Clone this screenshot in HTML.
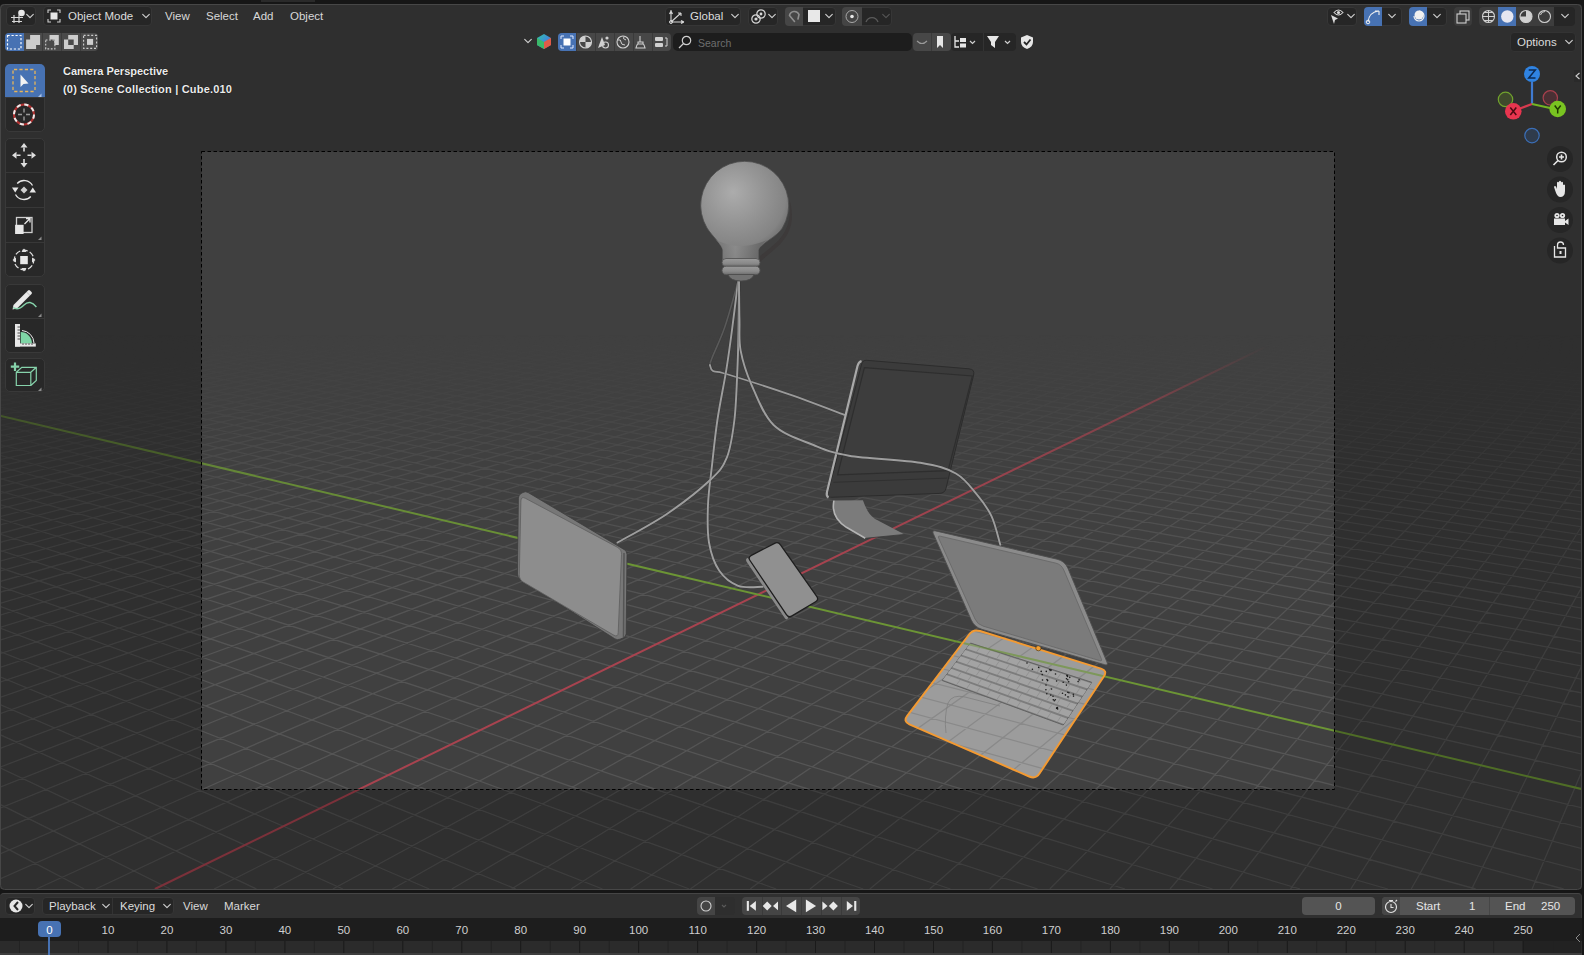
<!DOCTYPE html>
<html><head><meta charset="utf-8"><style>
*{box-sizing:border-box;margin:0;padding:0}
html,body{width:1584px;height:955px;overflow:hidden;background:#161616;font-family:"Liberation Sans",sans-serif;color:#d6d6d6}
.a{position:absolute}
</style></head><body>
<div class="a" style="left:261px;top:0;width:54px;height:4px;background:#242424"></div>
<svg id="vp" width="1584" height="955" viewBox="0 0 1584 955" style="position:absolute;left:0;top:0">
<defs>
 <linearGradient id="fade" x1="0" y1="0" x2="0" y2="955" gradientUnits="userSpaceOnUse">
  <stop offset="0" stop-color="#fff" stop-opacity="0"/>
  <stop offset="0.35" stop-color="#fff" stop-opacity="0"/>
  <stop offset="0.419" stop-color="#fff" stop-opacity="0.18"/>
  <stop offset="0.471" stop-color="#fff" stop-opacity="0.45"/>
  <stop offset="0.545" stop-color="#fff" stop-opacity="0.75"/>
  <stop offset="0.628" stop-color="#fff" stop-opacity="0.95"/>
  <stop offset="1" stop-color="#fff" stop-opacity="1"/>
 </linearGradient>
 <linearGradient id="fade2" x1="0" y1="0" x2="0" y2="955" gradientUnits="userSpaceOnUse">
  <stop offset="0" stop-color="#fff" stop-opacity="0"/>
  <stop offset="0.362" stop-color="#fff" stop-opacity="0"/>
  <stop offset="0.42" stop-color="#fff" stop-opacity="0.55"/>
  <stop offset="0.5" stop-color="#fff" stop-opacity="0.85"/>
  <stop offset="0.6" stop-color="#fff" stop-opacity="1"/>
  <stop offset="1" stop-color="#fff" stop-opacity="1"/>
 </linearGradient>
 <mask id="fm2" maskUnits="userSpaceOnUse" x="0" y="0" width="1584" height="955"><rect x="0" y="0" width="1584" height="955" fill="url(#fade2)"/></mask>
 <mask id="fm" maskUnits="userSpaceOnUse" x="0" y="0" width="1584" height="955"><rect x="0" y="0" width="1584" height="955" fill="url(#fade)"/></mask>
 <clipPath id="vclip"><rect x="0" y="4" width="1582" height="886" rx="4"/></clipPath>
</defs>
<g clip-path="url(#vclip)">
<rect x="0" y="4" width="1584" height="885" fill="#404040"/>
<path d="M980.0 631.0L1101.0 668.6Q1107.7 670.7 1103.8 676.5L1039.5 773.5Q1035.6 779.3 1029.2 776.5L909.4 724.3Q903.0 721.5 907.2 715.9L969.1 634.5Q973.3 628.9 980.0 631.0Z" fill="#9b9b9b"/>
<g mask="url(#fm)">
<path d="M542.4 155.6L1584.0 202.6M542.4 155.6L0.0 201.3M538.1 156.0L1584.0 203.4M546.9 155.8L0.0 202.2M533.8 156.3L1584.0 204.3M551.5 156.0L0.0 203.0M529.5 156.7L1584.0 205.1M556.0 156.2L0.0 203.9M525.1 157.1L1584.0 206.0M560.6 156.4L0.0 204.7M520.7 157.4L1584.0 206.9M565.3 156.7L0.0 205.6M516.3 157.8L1584.0 207.7M569.9 156.9L0.0 206.4M511.9 158.2L1584.0 208.6M574.6 157.1L0.0 207.3M507.4 158.6L1584.0 209.5M579.2 157.3L0.0 208.2M503.0 158.9L1584.0 210.4M584.0 157.5L0.0 209.1M498.4 159.3L1584.0 211.4M588.7 157.7L0.0 210.0M493.9 159.7L1584.0 212.3M593.4 157.9L0.0 211.0M489.3 160.1L1584.0 213.2M598.2 158.1L0.0 211.9M484.7 160.5L1584.0 214.2M603.0 158.4L0.0 212.9M480.1 160.9L1584.0 215.2M607.8 158.6L0.0 213.8M475.4 161.3L1584.0 216.1M612.6 158.8L0.0 214.8M470.7 161.7L1584.0 217.1M617.5 159.0L0.0 215.8M465.9 162.1L1584.0 218.1M622.4 159.2L0.0 216.8M461.2 162.5L1584.0 219.1M627.3 159.4L0.0 217.8M456.4 162.9L1584.0 220.1M632.2 159.7L0.0 218.8M451.6 163.3L1584.0 221.2M637.2 159.9L0.0 219.9M446.7 163.7L1584.0 222.2M642.1 160.1L0.0 220.9M441.8 164.1L1584.0 223.3M647.1 160.3L0.0 222.0M436.9 164.5L1584.0 224.3M652.2 160.6L0.0 223.0M431.9 164.9L1584.0 225.4M657.2 160.8L0.0 224.1M426.9 165.4L1584.0 226.5M662.3 161.0L0.0 225.2M421.9 165.8L1584.0 227.6M667.4 161.3L0.0 226.3M416.8 166.2L1584.0 228.8M672.5 161.5L0.0 227.5M411.7 166.6L1584.0 229.9M677.6 161.7L0.0 228.6M406.6 167.1L1584.0 231.0M682.8 161.9L0.0 229.8M401.4 167.5L1584.0 232.2M688.0 162.2L0.0 231.0M396.2 167.9L1584.0 233.4M693.2 162.4L0.0 232.2M391.0 168.4L1584.0 234.6M698.4 162.7L0.0 233.4M385.7 168.8L1584.0 235.8M703.7 162.9L0.0 234.6M380.4 169.3L1584.0 237.0M709.0 163.1L0.0 235.8M375.0 169.7L1584.0 238.3M714.3 163.4L0.0 237.1M369.6 170.2L1584.0 239.5M719.6 163.6L0.0 238.4M364.2 170.6L1584.0 240.8M725.0 163.9L0.0 239.7M358.7 171.1L1584.0 242.1M730.4 164.1L0.0 241.0M353.2 171.6L1584.0 243.4M735.8 164.3L0.0 242.3M347.6 172.0L1584.0 244.7M741.3 164.6L0.0 243.7M342.1 172.5L1584.0 246.1M746.7 164.8L0.0 245.1M336.4 173.0L1584.0 247.4M752.2 165.1L0.0 246.5M330.8 173.5L1584.0 248.8M757.8 165.3L0.0 247.9M325.0 173.9L1584.0 250.2M763.3 165.6L0.0 249.3M319.3 174.4L1584.0 251.6M768.9 165.8L0.0 250.8M313.5 174.9L1584.0 253.1M774.5 166.1L0.0 252.2M307.6 175.4L1584.0 254.5M780.2 166.3L0.0 253.7M301.8 175.9L1584.0 256.0M785.8 166.6L0.0 255.3M295.8 176.4L1584.0 257.5M791.5 166.9L0.0 256.8M289.9 176.9L1584.0 259.0M797.2 167.1L0.0 258.4M283.8 177.4L1584.0 260.5M803.0 167.4L0.0 260.0M277.8 177.9L1584.0 262.1M808.8 167.6L-0.0 261.6M271.7 178.4L1584.0 263.7M814.6 167.9L0.0 263.2M265.5 179.0L1584.0 265.3M820.4 168.2L0.0 264.9M259.3 179.5L1584.0 266.9M826.3 168.4L-0.0 266.6M253.0 180.0L1584.0 268.6M832.2 168.7L0.0 268.3M246.7 180.5L1584.0 270.3M838.1 169.0L0.0 270.1M240.4 181.1L1584.0 272.0M844.1 169.2L0.0 271.9M234.0 181.6L1584.0 273.7M850.1 169.5L0.0 273.7M227.6 182.2L1584.0 275.5M856.1 169.8L-0.0 275.5M221.1 182.7L1584.0 277.3M862.1 170.0L0.0 277.4M214.5 183.3L1584.0 279.1M868.2 170.3L0.0 279.3M207.9 183.8L1584.0 280.9M874.3 170.6L0.0 281.3M201.3 184.4L1584.0 282.8M880.5 170.9L0.0 283.2M194.6 184.9L1584.0 284.7M886.7 171.1L0.0 285.3M187.8 185.5L1584.0 286.6M892.9 171.4L0.0 287.3M181.0 186.1L1584.0 288.6M899.1 171.7L0.0 289.4M174.1 186.7L1584.0 290.6M905.4 172.0L0.0 291.5M167.2 187.2L1584.0 292.6M911.7 172.3L0.0 293.7M160.2 187.8L1584.0 294.7M918.0 172.6L0.0 295.9M153.2 188.4L1584.0 296.8M924.4 172.8L0.0 298.1M146.1 189.0L1584.0 298.9M930.8 173.1L0.0 300.4M138.9 189.6L1584.0 301.1M937.3 173.4L0.0 302.7M131.7 190.2L1584.0 303.3M943.7 173.7L0.0 305.1M124.5 190.9L1584.0 305.5M950.3 174.0L0.0 307.5M117.1 191.5L1584.0 307.8M956.8 174.3L0.0 309.9M109.7 192.1L1584.0 310.1M963.4 174.6L0.0 312.5M102.3 192.7L1584.0 312.5M970.0 174.9L0.0 315.0M94.8 193.4L1584.0 314.9M976.7 175.2L0.0 317.6M87.2 194.0L1584.0 317.4M983.3 175.5L-0.0 320.3M79.5 194.6L1584.0 319.9M990.1 175.8L-0.0 323.0M71.8 195.3L1584.0 322.4M996.8 176.1L-0.0 325.8M64.1 195.9L1584.0 325.0M1003.6 176.4L0.0 328.6M56.2 196.6L1584.0 327.6M1010.5 176.7L0.0 331.5M48.3 197.3L1584.0 330.3M1017.3 177.0L0.0 334.5M40.3 197.9L1584.0 333.1M1024.3 177.3L0.0 337.5M32.3 198.6L1584.0 335.8M1031.2 177.7L0.0 340.6M24.2 199.3L1584.0 338.7M1038.2 178.0L0.0 343.7M16.0 200.0L1584.0 341.6M1045.2 178.3L0.0 346.9M7.7 200.7L1584.0 344.6M1052.3 178.6L0.0 350.2M0.0 201.5L1584.0 347.6M1059.4 178.9L0.0 353.6M0.0 202.9L1584.0 350.7M1066.6 179.2L0.0 357.0M0.0 204.5L1584.0 353.8M1073.7 179.6L0.0 360.5M0.0 206.0L1584.0 357.0M1081.0 179.9L0.0 364.2M0.0 207.6L1584.0 360.3M1088.2 180.2L0.0 367.8M0.0 209.2L1584.0 363.6M1095.6 180.6L0.0 371.6M0.0 210.9L1584.0 367.1M1102.9 180.9L0.0 375.5M-0.0 212.6L1584.0 370.5M1110.3 181.2L0.0 379.5M0.0 214.3L1584.0 374.1M1117.7 181.6L0.0 383.5M0.0 216.1L1584.0 377.8M1125.2 181.9L0.0 387.7M0.0 217.9L1584.0 381.5M1132.7 182.2L0.0 392.0M0.0 219.7L1584.0 385.3M1140.3 182.6L0.0 396.4M0.0 221.6L1584.0 389.2M1147.9 182.9L0.0 400.9M0.0 223.6L1584.0 393.2M1155.6 183.3L0.0 405.5M0.0 225.5L1584.0 397.3M1163.3 183.6L0.0 410.3M0.0 227.6L1584.0 401.5M1171.0 184.0L0.0 415.2M0.0 229.6L1584.0 405.7M1178.8 184.3L0.0 420.2M0.0 231.8L1584.0 410.1M1186.6 184.7L0.0 425.3M0.0 233.9L1584.0 414.6M1194.5 185.0L0.0 430.6M0.0 236.2L1584.0 419.2M1202.4 185.4L0.0 436.1M0.0 238.5L1584.0 423.9M1210.4 185.7L0.0 441.7M0.0 240.8L1584.0 428.8M1218.4 186.1L0.0 447.5M0.0 243.2L1584.0 433.7M1226.5 186.5L0.0 453.5M0.0 245.7L1584.0 438.8M1234.6 186.8L0.0 459.6M0.0 248.2L1584.0 444.0M1242.8 187.2L0.0 466.0M0.0 250.8L1584.0 449.4M1251.0 187.6L0.0 472.5M0.0 253.5L1584.0 454.9M1259.3 187.9L-0.0 479.3M0.0 256.2L1584.0 460.6M1267.6 188.3L0.0 486.3M0.0 259.1L1584.0 466.4M1275.9 188.7L0.0 493.5M0.0 262.0L1584.0 472.4M1284.3 189.1L0.0 500.9M0.0 264.9L1584.0 478.6M1292.8 189.4L0.0 508.7M0.0 268.0L1584.0 484.9M1301.3 189.8L0.0 516.6M0.0 271.2L1584.0 491.4M1309.9 190.2L0.0 524.9M0.0 274.4L1584.0 498.2M1318.5 190.6L0.0 533.5M0.0 277.8L1584.0 505.1M1327.2 191.0L0.0 542.4M0.0 281.3L1584.0 512.2M1335.9 191.4L0.0 551.6M0.0 284.8L1584.0 519.6M1344.7 191.8L0.0 561.2M0.0 288.5L1584.0 527.2M1353.6 192.2L0.0 571.1M0.0 292.3L1584.0 535.1M1362.4 192.6L0.0 581.5M0.0 296.3L1584.0 543.2M1371.4 193.0L0.0 592.3M0.0 300.3L1584.0 551.6M1380.4 193.4L0.0 603.5M-0.0 304.5L1584.0 560.3M1389.5 193.8L0.0 615.2M-0.0 308.9L1584.0 569.2M1398.6 194.2L0.0 627.4M0.0 313.4L1584.0 578.5M1407.8 194.6L0.0 640.2M0.0 318.1L1584.0 588.1M1417.0 195.0L0.0 653.6M0.0 322.9L1584.0 598.1M1426.3 195.5L0.0 667.5M0.0 327.9L1584.0 608.5M1435.7 195.9L0.0 682.2M0.0 333.1L1584.0 619.2M1445.1 196.3L0.0 697.5M0.0 338.5L1584.0 630.4M1454.6 196.7L0.0 713.6M0.0 344.2L1584.0 642.0M1464.1 197.2L0.0 730.6M0.0 350.0L1584.0 654.1M1473.7 197.6L0.0 748.4M0.0 356.1L1584.0 666.6M1483.4 198.0L0.0 767.2M0.0 362.5L1584.0 679.7M1493.1 198.5L0.0 787.1M0.0 369.1L1584.0 693.4M1502.9 198.9L0.0 808.1M0.0 376.0L1584.0 707.7M1512.7 199.4L0.0 830.3M-0.0 383.2L1584.0 722.6M1522.7 199.8L0.0 853.9M0.0 390.8L1584.0 738.2M1532.6 200.3L0.0 879.0M0.0 398.7L1584.0 754.5M1542.7 200.7L36.5 889.0M0.0 407.0L1584.0 771.6M1552.8 201.2L95.7 889.0M0.0 424.8L1584.0 808.4M1573.3 202.1L214.2 889.0M0.0 434.4L1584.0 828.3M1583.6 202.6L273.5 889.0M0.0 444.6L1584.0 849.2M1584.0 208.5L332.9 889.0M0.0 455.3L1584.0 871.2M1584.0 215.1L392.3 889.0M0.0 466.6L1563.6 889.0M1584.0 222.2L451.8 889.0M0.0 478.5L1475.7 889.0M1584.0 230.0L511.4 889.0M0.0 491.1L1387.8 889.0M1584.0 238.5L571.0 889.0M0.0 504.6L1300.1 889.0M1584.0 247.8L630.6 889.0M0.0 518.9L1212.5 889.0M1584.0 258.0L690.3 889.0M0.0 534.1L1125.0 889.0M1584.0 269.4L750.1 889.0M0.0 550.3L1037.6 889.0M1584.0 282.0L809.9 889.0M-0.0 567.7L950.4 889.0M1584.0 296.1L869.8 889.0M0.0 586.4L863.2 889.0M1584.0 311.9L929.7 889.0M0.0 606.4L776.2 889.0M1584.0 329.9L989.7 889.0M0.0 628.1L689.3 889.0M1584.0 350.5L1049.8 889.0M0.0 651.5L602.5 889.0M1584.0 374.2L1109.9 889.0M0.0 676.8L515.8 889.0M1584.0 402.0L1170.0 889.0M0.0 704.5L429.3 889.0M1584.0 434.8L1230.2 889.0M0.0 734.7L342.8 889.0M1584.0 474.3L1290.5 889.0M0.0 767.8L256.5 889.0M1584.0 522.7L1350.8 889.0M0.0 804.4L170.3 889.0M1584.0 583.3L1411.2 889.0M0.0 844.9L84.2 889.0M1584.0 661.5L1471.7 889.0M1584.0 766.3L1532.1 889.0" stroke="#555555" stroke-width="1.3" fill="none"/>
</g>
<g mask="url(#fm2)">
<path d="M1584.0 191.4L154.9 889.0" stroke="#a8434f" stroke-width="2" fill="none"/>
<path d="M0.0 415.7L1584.0 789.6" stroke="#6c9535" stroke-width="2" fill="none"/>
</g>
<path d="M738.2 281.3C736.0 288.9 729.3 314.0 724.9 326.8C720.5 339.6 714.5 351.6 712.0 358.0C709.5 364.4 710.2 363.8 709.9 365.0" fill="none" stroke="#2e2e2e" stroke-width="2.5" stroke-linecap="round" stroke-opacity="0.35"/><path d="M738.2 281.3C736.0 288.9 729.3 314.0 724.9 326.8C720.5 339.6 714.5 351.6 712.0 358.0C709.5 364.4 710.2 363.8 709.9 365.0" fill="none" stroke="#5a5a5a" stroke-width="1.6" stroke-linecap="round"/><path d="M709.9 365.0C710.4 366.0 710.2 369.5 713.0 371.0C715.8 372.5 713.7 370.1 726.4 374.0C739.1 377.9 769.6 387.6 789.3 394.4C808.9 401.2 835.1 411.4 844.3 414.8" fill="none" stroke="#2e2e2e" stroke-width="2.7" stroke-linecap="round" stroke-opacity="0.35"/><path d="M709.9 365.0C710.4 366.0 710.2 369.5 713.0 371.0C715.8 372.5 713.7 370.1 726.4 374.0C739.1 377.9 769.6 387.6 789.3 394.4C808.9 401.2 835.1 411.4 844.3 414.8" fill="none" stroke="#9a9a9a" stroke-width="1.8" stroke-linecap="round"/><path d="M528.1 492.5L624.4 549.7Q627.0 551.2 627.0 554.2L626.1 633.7Q626.1 636.7 623.3 637.8L620.0 639.2Q617.2 640.3 614.7 638.7L520.0 578.6Q517.5 577.0 517.5 574.0L518.4 498.1Q518.4 495.1 521.0 493.6L522.9 492.5Q525.5 491.0 528.1 492.5Z" fill="#777777" stroke="#3c3c3c" stroke-width="0.8"/><path d="M525.4 498.3L617.3 547.2Q621.7 549.5 621.5 554.5L618.2 632.6Q618.0 637.6 613.7 635.1L523.5 582.2Q519.2 579.7 519.3 574.7L520.9 501.0Q521.0 496.0 525.4 498.3Z" fill="#8d8d8d" stroke="#5e5e5e" stroke-width="0.8"/><path d="M624 553L623.5 637" stroke="#555" stroke-width="1.5"/><path d="M833.9 500.6C832 510 835 520 846.4 527.3L865.3 538.3L904.6 534.4L874.7 518.7C868 514 866 508 862.9 500.2Z" fill="#7b7b7b"/><path d="M833.9 500.6C832 510 835 520 846.4 527.3L865.3 538.3" fill="none" stroke="#b4b4b4" stroke-width="1.6"/><path d="M865.3 538.3L904.6 534.4" stroke="#3a3a3a" stroke-width="0.8"/><path d="M866.7 360.3L969.0 368.8Q975.0 369.3 973.6 375.1L946.0 488.3Q944.8 493.2 939.8 493.4L830.7 497.3Q826.7 497.4 827.7 493.5L861.7 363.9Q862.7 360.0 866.7 360.3Z" fill="#3b3b3b" stroke="#2c2c2c" stroke-width="1"/><path d="M864.4 367.6L972.4 376.0L948.1 470.6L837.6 474.8Z" fill="#3d3d3d" stroke="#2e2e2e" stroke-width="1.2"/><path d="M833.4 482.3L947.3 478.1" stroke="#303030" stroke-width="1"/><path d="M861.5 361Q858.5 362 857.5 366L827 492Q826 496 828.5 497.5" fill="none" stroke="#a9a9a9" stroke-width="2.2"/><path d="M980.0 631.0L1101.0 668.6Q1107.7 670.7 1103.8 676.5L1039.5 773.5Q1035.6 779.3 1029.2 776.5L909.4 724.3Q903.0 721.5 907.2 715.9L969.1 634.5Q973.3 628.9 980.0 631.0Z" fill="#9d9d9d" fill-opacity="0.72"/><path d="M970.6 643.1L1091.7 682.3L1063.2 725.0L942.2 680.5Z" fill="#7c7c7c" stroke="#626262" stroke-width="1"/><path d="M970.0 643.8L1091.1 683.2L1087.5 688.6L966.4 648.6Z" fill="#a3a3a3"/><path d="M980.1 647.1L976.5 651.9" stroke="#8a8a8a" stroke-width="0.7"/><path d="M990.2 650.4L986.6 655.2" stroke="#8a8a8a" stroke-width="0.7"/><path d="M1000.3 653.7L996.7 658.6" stroke="#8a8a8a" stroke-width="0.7"/><path d="M1010.4 657.0L1006.8 661.9" stroke="#8a8a8a" stroke-width="0.7"/><path d="M1020.5 660.2L1016.9 665.2" stroke="#8a8a8a" stroke-width="0.7"/><path d="M1030.6 663.5L1027.0 668.6" stroke="#8a8a8a" stroke-width="0.7"/><path d="M1040.7 666.8L1037.1 671.9" stroke="#8a8a8a" stroke-width="0.7"/><path d="M1050.8 670.1L1047.2 675.2" stroke="#8a8a8a" stroke-width="0.7"/><path d="M1060.9 673.3L1057.2 678.6" stroke="#8a8a8a" stroke-width="0.7"/><path d="M1070.9 676.6L1067.3 681.9" stroke="#8a8a8a" stroke-width="0.7"/><path d="M1081.0 679.9L1077.4 685.2" stroke="#8a8a8a" stroke-width="0.7"/><path d="M965.3 650.1L1086.4 690.3L1082.8 695.7L961.7 654.8Z" fill="#a3a3a3"/><path d="M979.0 654.6L975.4 659.4" stroke="#8a8a8a" stroke-width="0.7"/><path d="M989.1 658.0L985.5 662.9" stroke="#8a8a8a" stroke-width="0.7"/><path d="M999.2 661.3L995.6 666.3" stroke="#8a8a8a" stroke-width="0.7"/><path d="M1009.3 664.7L1005.7 669.7" stroke="#8a8a8a" stroke-width="0.7"/><path d="M1019.4 668.0L1015.8 673.1" stroke="#8a8a8a" stroke-width="0.7"/><path d="M1029.5 671.4L1025.9 676.5" stroke="#8a8a8a" stroke-width="0.7"/><path d="M1039.6 674.7L1036.0 679.9" stroke="#8a8a8a" stroke-width="0.7"/><path d="M1049.7 678.1L1046.0 683.3" stroke="#8a8a8a" stroke-width="0.7"/><path d="M1059.7 681.4L1056.1 686.7" stroke="#8a8a8a" stroke-width="0.7"/><path d="M1069.8 684.8L1066.2 690.1" stroke="#8a8a8a" stroke-width="0.7"/><path d="M1079.9 688.1L1076.3 693.5" stroke="#8a8a8a" stroke-width="0.7"/><path d="M960.6 656.3L1081.6 697.4L1078.0 702.8L957.0 661.1Z" fill="#a3a3a3"/><path d="M970.7 659.7L967.1 664.5" stroke="#8a8a8a" stroke-width="0.7"/><path d="M980.7 663.2L977.1 668.0" stroke="#8a8a8a" stroke-width="0.7"/><path d="M990.8 666.6L987.2 671.5" stroke="#8a8a8a" stroke-width="0.7"/><path d="M1000.9 670.0L997.3 675.0" stroke="#8a8a8a" stroke-width="0.7"/><path d="M1011.0 673.4L1007.4 678.4" stroke="#8a8a8a" stroke-width="0.7"/><path d="M1021.1 676.9L1017.5 681.9" stroke="#8a8a8a" stroke-width="0.7"/><path d="M1031.2 680.3L1027.6 685.4" stroke="#8a8a8a" stroke-width="0.7"/><path d="M1041.3 683.7L1037.7 688.9" stroke="#8a8a8a" stroke-width="0.7"/><path d="M1051.4 687.1L1047.8 692.4" stroke="#8a8a8a" stroke-width="0.7"/><path d="M1061.5 690.5L1057.8 695.8" stroke="#8a8a8a" stroke-width="0.7"/><path d="M1071.5 694.0L1067.9 699.3" stroke="#8a8a8a" stroke-width="0.7"/><path d="M955.8 662.5L1076.9 704.5L1073.3 709.9L952.2 667.3Z" fill="#a3a3a3"/><path d="M969.6 667.3L966.0 672.1" stroke="#8a8a8a" stroke-width="0.7"/><path d="M979.6 670.8L976.0 675.7" stroke="#8a8a8a" stroke-width="0.7"/><path d="M989.7 674.3L986.1 679.2" stroke="#8a8a8a" stroke-width="0.7"/><path d="M999.8 677.8L996.2 682.8" stroke="#8a8a8a" stroke-width="0.7"/><path d="M1009.9 681.3L1006.3 686.3" stroke="#8a8a8a" stroke-width="0.7"/><path d="M1020.0 684.8L1016.4 689.9" stroke="#8a8a8a" stroke-width="0.7"/><path d="M1030.1 688.3L1026.5 693.4" stroke="#8a8a8a" stroke-width="0.7"/><path d="M1040.2 691.8L1036.6 697.0" stroke="#8a8a8a" stroke-width="0.7"/><path d="M1050.2 695.3L1046.6 700.5" stroke="#8a8a8a" stroke-width="0.7"/><path d="M1060.3 698.8L1056.7 704.1" stroke="#8a8a8a" stroke-width="0.7"/><path d="M1070.4 702.3L1066.8 707.6" stroke="#8a8a8a" stroke-width="0.7"/><path d="M951.1 668.8L1072.1 711.6L1068.5 717.0L947.5 673.5Z" fill="#a3a3a3"/><path d="M961.2 672.4L957.6 677.1" stroke="#8a8a8a" stroke-width="0.7"/><path d="M971.3 675.9L967.7 680.8" stroke="#8a8a8a" stroke-width="0.7"/><path d="M981.4 679.5L977.8 684.4" stroke="#8a8a8a" stroke-width="0.7"/><path d="M991.4 683.1L987.8 688.0" stroke="#8a8a8a" stroke-width="0.7"/><path d="M1001.5 686.6L997.9 691.6" stroke="#8a8a8a" stroke-width="0.7"/><path d="M1011.6 690.2L1008.0 695.3" stroke="#8a8a8a" stroke-width="0.7"/><path d="M1021.7 693.8L1018.1 698.9" stroke="#8a8a8a" stroke-width="0.7"/><path d="M1031.8 697.3L1028.2 702.5" stroke="#8a8a8a" stroke-width="0.7"/><path d="M1041.9 700.9L1038.3 706.2" stroke="#8a8a8a" stroke-width="0.7"/><path d="M1052.0 704.5L1048.4 709.8" stroke="#8a8a8a" stroke-width="0.7"/><path d="M1062.0 708.1L1058.4 713.4" stroke="#8a8a8a" stroke-width="0.7"/><path d="M946.4 675.0L1067.4 718.7L1063.8 724.1L942.8 679.8Z" fill="#a3a3a3"/><path d="M960.1 680.0L956.5 684.8" stroke="#8a8a8a" stroke-width="0.7"/><path d="M970.2 683.6L966.6 688.5" stroke="#8a8a8a" stroke-width="0.7"/><path d="M980.2 687.3L976.6 692.2" stroke="#8a8a8a" stroke-width="0.7"/><path d="M990.3 690.9L986.7 695.9" stroke="#8a8a8a" stroke-width="0.7"/><path d="M1000.4 694.5L996.8 699.6" stroke="#8a8a8a" stroke-width="0.7"/><path d="M1010.5 698.2L1006.9 703.3" stroke="#8a8a8a" stroke-width="0.7"/><path d="M1020.6 701.8L1017.0 707.0" stroke="#8a8a8a" stroke-width="0.7"/><path d="M1030.7 705.5L1027.1 710.7" stroke="#8a8a8a" stroke-width="0.7"/><path d="M1040.8 709.1L1037.1 714.4" stroke="#8a8a8a" stroke-width="0.7"/><path d="M1050.8 712.8L1047.2 718.1" stroke="#8a8a8a" stroke-width="0.7"/><path d="M1060.9 716.4L1057.3 721.8" stroke="#8a8a8a" stroke-width="0.7"/><g fill="#1a1a1a"><circle cx="1042.2" cy="674.6" r="0.8"/><circle cx="1047.6" cy="680.6" r="0.8"/><circle cx="1067.5" cy="676.4" r="0.8"/><circle cx="1027.0" cy="663.0" r="0.8"/><circle cx="1046.3" cy="671.4" r="0.8"/><circle cx="1073.5" cy="696.1" r="0.8"/><circle cx="1067.8" cy="692.2" r="0.8"/><circle cx="1066.5" cy="678.8" r="0.8"/><circle cx="1053.0" cy="696.3" r="0.8"/><circle cx="1051.5" cy="689.0" r="0.8"/><circle cx="1069.7" cy="677.2" r="0.8"/><circle cx="1062.5" cy="693.3" r="0.8"/><circle cx="1050.9" cy="669.7" r="0.8"/><circle cx="1068.9" cy="692.8" r="0.8"/><circle cx="1055.3" cy="699.8" r="0.8"/><circle cx="1054.3" cy="700.7" r="0.8"/><circle cx="1046.0" cy="685.0" r="0.8"/><circle cx="1045.9" cy="689.7" r="0.8"/><circle cx="1078.1" cy="681.6" r="0.8"/><circle cx="1038.7" cy="667.4" r="0.8"/><circle cx="1073.3" cy="694.2" r="0.8"/><circle cx="1063.2" cy="682.2" r="0.8"/><circle cx="1056.6" cy="681.0" r="0.8"/><circle cx="1047.0" cy="679.6" r="0.8"/><circle cx="1050.8" cy="695.1" r="0.8"/><circle cx="1053.3" cy="699.7" r="0.8"/><circle cx="1056.7" cy="708.3" r="0.8"/><circle cx="1067.7" cy="679.7" r="0.8"/><circle cx="1057.4" cy="707.6" r="0.8"/><circle cx="1068.0" cy="696.9" r="0.8"/><circle cx="1068.7" cy="681.8" r="0.8"/><circle cx="1065.4" cy="694.9" r="0.8"/><circle cx="1049.6" cy="669.8" r="0.8"/><circle cx="1056.7" cy="708.1" r="0.8"/><circle cx="1032.4" cy="669.3" r="0.8"/><circle cx="1055.5" cy="674.0" r="0.8"/><circle cx="1042.5" cy="680.0" r="0.8"/><circle cx="1079.1" cy="679.9" r="0.8"/><circle cx="1067.3" cy="675.8" r="0.8"/><circle cx="1066.4" cy="685.1" r="0.8"/><circle cx="1057.6" cy="708.9" r="0.8"/><circle cx="1046.8" cy="693.7" r="0.8"/><circle cx="1050.9" cy="670.5" r="0.8"/><circle cx="1066.9" cy="675.2" r="0.8"/><circle cx="1041.2" cy="671.4" r="0.8"/></g><path d="M948 703Q952 694 965 697L1000 706" fill="none" stroke="#7f7f7f" stroke-width="0.8"/><path d="M948 703Q944 716 946 733" fill="none" stroke="#7f7f7f" stroke-width="0.8"/><clipPath id="lbclip"><path d="M980.0 631.0L1101.0 668.6Q1107.7 670.7 1103.8 676.5L1039.5 773.5Q1035.6 779.3 1029.2 776.5L909.4 724.3Q903.0 721.5 907.2 715.9L969.1 634.5Q973.3 628.9 980.0 631.0Z"/></clipPath><path d="M0.0 415.7L1584.0 789.6" clip-path="url(#lbclip)" stroke="#6c9535" stroke-width="2" stroke-opacity="0.5"/><path d="M980.0 631.0L1101.0 668.6Q1107.7 670.7 1103.8 676.5L1039.5 773.5Q1035.6 779.3 1029.2 776.5L909.4 724.3Q903.0 721.5 907.2 715.9L969.1 634.5Q973.3 628.9 980.0 631.0Z" fill="none" stroke="#f39a32" stroke-width="2"/><circle cx="1038.4" cy="648.2" r="2.6" fill="#f5a030" stroke="#3a2a10" stroke-width="0.6"/><path d="M935.6 530.9L1057.1 559.2Q1064.9 561.0 1068.0 568.4L1107.0 662.1Q1108.5 665.8 1104.7 664.7L982.1 629.4Q974.4 627.2 971.2 619.9L933.3 533.7Q931.7 530.0 935.6 530.9Z" fill="#8b8b8b" stroke="#4e4e4e" stroke-width="0.9"/><path d="M940.4 536.2L1055.7 563.1Q1061.5 564.5 1063.8 570.0L1101.3 658.7Q1102.5 661.5 1099.6 660.6L983.3 626.2Q977.5 624.5 975.0 619.0L938.7 538.2Q937.5 535.5 940.4 536.2Z" fill="#7b7b7b" stroke="#666" stroke-width="0.8"/><path d="M748.9 558.9L787.5 616.3Q788.6 618.0 787.3 619.0L787.3 619.0Q786.0 620.0 784.9 618.3L746.6 561.7Q745.5 560.0 746.6 558.6L746.6 558.6Q747.8 557.2 748.9 558.9Z" fill="#8a8a8a"/><path d="M780.5 544.8L816.7 596.3Q819.0 599.6 815.6 601.7L792.0 615.9Q788.6 618.0 786.4 614.7L750.0 560.5Q747.8 557.2 751.4 555.4L774.6 543.3Q778.2 541.5 780.5 544.8Z" fill="#909090" stroke="#1e1e1e" stroke-width="1.3"/><path d="M738.0 282.0C737.0 290.0 733.9 315.4 732.0 330.0C730.1 344.6 728.8 354.3 726.4 369.3C724.0 384.3 719.8 403.7 717.4 420.0C715.0 436.3 713.4 453.0 711.8 467.1C710.2 481.2 708.5 492.2 708.0 504.8C707.5 517.4 707.1 531.5 709.0 542.5C710.9 553.5 714.4 563.6 719.3 570.8C724.2 578.0 731.0 583.1 738.2 585.8C745.4 588.5 758.6 586.6 762.7 586.8" fill="none" stroke="#2e2e2e" stroke-width="2.8" stroke-linecap="round" stroke-opacity="0.35"/><path d="M738.0 282.0C737.0 290.0 733.9 315.4 732.0 330.0C730.1 344.6 728.8 354.3 726.4 369.3C724.0 384.3 719.8 403.7 717.4 420.0C715.0 436.3 713.4 453.0 711.8 467.1C710.2 481.2 708.5 492.2 708.0 504.8C707.5 517.4 707.1 531.5 709.0 542.5C710.9 553.5 714.4 563.6 719.3 570.8C724.2 578.0 731.0 583.1 738.2 585.8C745.4 588.5 758.6 586.6 762.7 586.8" fill="none" stroke="#9e9e9e" stroke-width="1.9" stroke-linecap="round"/><path d="M739.0 282.0C738.9 290.0 738.8 315.4 738.5 330.0C738.2 344.6 738.1 354.3 737.4 369.3C736.7 384.3 736.2 405.3 734.4 420.0C732.6 434.7 730.9 447.6 726.8 457.7C722.7 467.8 719.9 470.9 709.9 480.3C699.9 489.7 681.9 503.8 666.5 514.2C651.1 524.6 625.7 537.8 617.5 542.5" fill="none" stroke="#2e2e2e" stroke-width="2.8" stroke-linecap="round" stroke-opacity="0.35"/><path d="M739.0 282.0C738.9 290.0 738.8 315.4 738.5 330.0C738.2 344.6 738.1 354.3 737.4 369.3C736.7 384.3 736.2 405.3 734.4 420.0C732.6 434.7 730.9 447.6 726.8 457.7C722.7 467.8 719.9 470.9 709.9 480.3C699.9 489.7 681.9 503.8 666.5 514.2C651.1 524.6 625.7 537.8 617.5 542.5" fill="none" stroke="#9e9e9e" stroke-width="1.9" stroke-linecap="round"/><path d="M739.0 282.0C739.1 288.3 739.2 308.6 739.5 320.0C739.8 331.4 738.6 339.6 740.6 350.4C742.6 361.2 746.1 372.6 751.6 385.0C757.1 397.4 763.3 415.0 773.6 425.0C783.9 435.0 800.9 439.9 813.5 445.0C826.1 450.1 831.2 452.7 849.0 455.7C866.8 458.7 902.5 459.8 920.3 462.8C938.1 465.8 946.4 468.1 955.9 473.5C965.4 478.9 971.3 487.8 977.2 494.9C983.1 502.0 987.6 507.9 991.5 516.2C995.4 524.5 998.8 540.0 1000.3 544.7" fill="none" stroke="#2e2e2e" stroke-width="2.8" stroke-linecap="round" stroke-opacity="0.35"/><path d="M739.0 282.0C739.1 288.3 739.2 308.6 739.5 320.0C739.8 331.4 738.6 339.6 740.6 350.4C742.6 361.2 746.1 372.6 751.6 385.0C757.1 397.4 763.3 415.0 773.6 425.0C783.9 435.0 800.9 439.9 813.5 445.0C826.1 450.1 831.2 452.7 849.0 455.7C866.8 458.7 902.5 459.8 920.3 462.8C938.1 465.8 946.4 468.1 955.9 473.5C965.4 478.9 971.3 487.8 977.2 494.9C983.1 502.0 987.6 507.9 991.5 516.2C995.4 524.5 998.8 540.0 1000.3 544.7" fill="none" stroke="#9e9e9e" stroke-width="1.9" stroke-linecap="round"/><defs><radialGradient id="bg" cx="735" cy="196" r="64" gradientUnits="userSpaceOnUse" fx="733" fy="192">
<stop offset="0" stop-color="#acacac"/><stop offset="0.45" stop-color="#959595"/><stop offset="0.8" stop-color="#848484"/><stop offset="1" stop-color="#656565"/></radialGradient>
<linearGradient id="ng" x1="722" y1="0" x2="760" y2="0" gradientUnits="userSpaceOnUse"><stop offset="0" stop-color="#7a7a7a"/><stop offset="0.35" stop-color="#8c8c8c"/><stop offset="1" stop-color="#676767"/></linearGradient>
<linearGradient id="rg" x1="0" y1="0" x2="0" y2="1"><stop offset="0" stop-color="#9a9a9a"/><stop offset="0.6" stop-color="#8a8a8a"/><stop offset="1" stop-color="#6c6c6c"/></linearGradient></defs><path d="M789.5 200C792 222 786 236 770 248L760 256V262L776 248C792 234 795 218 789.5 200Z" fill="#3a3535" opacity="0.55"/><path d="M722.7 262V250C721.5 244 712 236 707 228A44 44 0 1 1 782.4 228C777 237 760 244 758.5 250V262Z" fill="url(#bg)" stroke="#4e4e4e" stroke-width="0.8"/><path d="M722.7 262V250C722 246 718 242 716 240Q741 252 767 240C763 244 759 247 758.5 250V262Z" fill="url(#ng)" opacity="0.85"/><rect x="722" y="258.5" width="38" height="8" rx="4" fill="url(#rg)" stroke="#555" stroke-width="0.9"/><rect x="722" y="266.2" width="38" height="8.5" rx="4.2" fill="url(#rg)" stroke="#555" stroke-width="0.9"/><path d="M728 274.5H754Q752 281 741 281Q730 281 728 274.5Z" fill="#727272" stroke="#4a4a4a" stroke-width="0.8"/>
<path fill-rule="evenodd" fill="#000" fill-opacity="0.265" d="M0 4H1584V889H0Z M201 151V790H1335V151Z"/>
<rect x="201.5" y="151.5" width="1133" height="638" fill="none" stroke="#363636" stroke-width="1"/>
<rect x="201.5" y="151.5" width="1133" height="638" fill="none" stroke="#000" stroke-width="1" stroke-dasharray="3.5 2.5"/>
</g>
<rect x="0.5" y="4.5" width="1581" height="885" rx="4" fill="none" stroke="#474747" stroke-width="1"/>
</svg>
<div class="a" style="left:0px;top:0px;width:1584px;height:4px;background:#161616;border-radius:0px;"></div><div class="a" style="left:261px;top:0px;width:54px;height:2px;background:#2a2a2a;border-radius:0px;"></div><div class="a" style="left:1582px;top:0px;width:2px;height:955px;background:#161616;border-radius:0px;"></div><div class="a" style="left:6px;top:6px;width:30px;height:20px;background:#262626;border-radius:4px;border:1px solid #363636;"></div><svg class="a" style="left:9px;top:8px;" width="18" height="16" viewBox="0 0 18 16"><circle cx="12.5" cy="5" r="3.3" fill="#e8e8e8"/><path d="M2 9.5H14M3 13.5H13M5 7V15M10 7V15" stroke="#d8d8d8" stroke-width="1.2" fill="none"/></svg><svg class="a" style="left:25px;top:12px;" width="10" height="8" viewBox="0 0 10 8"><path d="M1.7000000000000002 2.35L5 5.65L8.3 2.35" fill="none" stroke="#cfcfcf" stroke-width="1.15" stroke-linecap="round" stroke-linejoin="round"/></svg><div class="a" style="left:43px;top:6px;width:109px;height:20px;background:#262626;border-radius:4px;border:1px solid #363636;"></div><svg class="a" style="left:46px;top:8px;" width="16" height="16" viewBox="0 0 16 16"><path d="M2 5V2H5M11 2H14V5M14 11V14H11M5 14H2V11" stroke="#d0d0d0" stroke-width="1.1" fill="none"/><rect x="4.5" y="4.5" width="7" height="7" fill="#e6e6e6"/></svg><div class="a" style="left:68px;top:11.17px;font-size:11.5px;line-height:11.5px;color:#dcdcdc;font-weight:normal;white-space:nowrap;">Object Mode</div><svg class="a" style="left:141px;top:12px;" width="10" height="8" viewBox="0 0 10 8"><path d="M1.7000000000000002 2.35L5 5.65L8.3 2.35" fill="none" stroke="#cfcfcf" stroke-width="1.15" stroke-linecap="round" stroke-linejoin="round"/></svg><div class="a" style="left:165px;top:11.17px;font-size:11.5px;line-height:11.5px;color:#d8d8d8;font-weight:normal;white-space:nowrap;">View</div><div class="a" style="left:206px;top:11.17px;font-size:11.5px;line-height:11.5px;color:#d8d8d8;font-weight:normal;white-space:nowrap;">Select</div><div class="a" style="left:253px;top:11.17px;font-size:11.5px;line-height:11.5px;color:#d8d8d8;font-weight:normal;white-space:nowrap;">Add</div><div class="a" style="left:290px;top:11.17px;font-size:11.5px;line-height:11.5px;color:#d8d8d8;font-weight:normal;white-space:nowrap;">Object</div><div class="a" style="left:665px;top:7px;width:76px;height:19px;background:#262626;border-radius:4px;border:1px solid #363636;"></div><svg class="a" style="left:668px;top:8px;" width="18" height="17" viewBox="0 0 18 17"><path d="M3 2V14H16M3 14L13 5M3 3L1.5 6M3 3L4.5 6M16 14L13 12.5M16 14L13 15.5M13 5H10M13 5V8" stroke="#d6d6d6" stroke-width="1.1" fill="none"/><circle cx="3" cy="14" r="1.5" fill="none" stroke="#d6d6d6"/></svg><div class="a" style="left:690px;top:11.17px;font-size:11.5px;line-height:11.5px;color:#dcdcdc;font-weight:normal;white-space:nowrap;">Global</div><svg class="a" style="left:730px;top:12px;" width="10" height="8" viewBox="0 0 10 8"><path d="M1.7000000000000002 2.35L5 5.65L8.3 2.35" fill="none" stroke="#cfcfcf" stroke-width="1.15" stroke-linecap="round" stroke-linejoin="round"/></svg><div class="a" style="left:748px;top:7px;width:30px;height:19px;background:#262626;border-radius:4px;border:1px solid #363636;"></div><svg class="a" style="left:750px;top:8px;" width="18" height="17" viewBox="0 0 18 17"><circle cx="6" cy="11" r="4.2" fill="none" stroke="#d6d6d6" stroke-width="1.2"/><circle cx="6" cy="11" r="1.6" fill="#d6d6d6"/><circle cx="11" cy="6" r="4.2" fill="none" stroke="#d6d6d6" stroke-width="1.2"/><circle cx="11" cy="6" r="1.4" fill="#d6d6d6"/></svg><svg class="a" style="left:767px;top:12px;" width="10" height="8" viewBox="0 0 10 8"><path d="M1.7000000000000002 2.35L5 5.65L8.3 2.35" fill="none" stroke="#cfcfcf" stroke-width="1.15" stroke-linecap="round" stroke-linejoin="round"/></svg><div class="a" style="left:785px;top:7px;width:51px;height:19px;background:#262626;border-radius:4px;border:1px solid #363636;"></div><div class="a" style="left:785px;top:7px;width:18px;height:19px;background:#464646;border-radius:4px;border-top-right-radius:0;border-bottom-right-radius:0;"></div><svg class="a" style="left:786px;top:9px;" width="16" height="15" viewBox="0 0 16 15"><path d="M3.5 6.5A5 5 0 0 1 13 5.5L12 10M3.5 6.5L8.5 12.5" stroke="#8f8f8f" stroke-width="1.6" fill="none" stroke-linecap="round"/></svg><div class="a" style="left:808px;top:10px;width:12px;height:12px;background:#e8e8e8;border-radius:0px;"></div><svg class="a" style="left:824px;top:12px;" width="10" height="8" viewBox="0 0 10 8"><path d="M1.7000000000000002 2.35L5 5.65L8.3 2.35" fill="none" stroke="#cfcfcf" stroke-width="1.15" stroke-linecap="round" stroke-linejoin="round"/></svg><div class="a" style="left:842px;top:7px;width:50px;height:19px;background:#262626;border-radius:4px;border:1px solid #363636;"></div><div class="a" style="left:842px;top:7px;width:20px;height:19px;background:#444444;border-radius:4px;border-top-right-radius:0;border-bottom-right-radius:0;"></div><svg class="a" style="left:844px;top:8px;" width="16" height="17" viewBox="0 0 16 17"><circle cx="8" cy="8.5" r="6" fill="none" stroke="#a8a8a8" stroke-width="1"/><circle cx="8" cy="8.5" r="1.8" fill="#e8e8e8"/></svg><svg class="a" style="left:864px;top:9px;" width="16" height="15" viewBox="0 0 16 15"><path d="M2 13A6.5 7 0 0 1 14 13" stroke="#5a5a5a" stroke-width="1.3" fill="none"/></svg><svg class="a" style="left:881px;top:12px;" width="10" height="8" viewBox="0 0 10 8"><path d="M1.7000000000000002 2.35L5 5.65L8.3 2.35" fill="none" stroke="#555555" stroke-width="1.15" stroke-linecap="round" stroke-linejoin="round"/></svg><div class="a" style="left:1327px;top:7px;width:30px;height:19px;background:#262626;border-radius:4px;border:1px solid #363636;"></div><svg class="a" style="left:1328px;top:8px;" width="18" height="18" viewBox="0 0 18 18"><path d="M6 4.5Q10.5 -0.5 15 4.5Q10.5 9.5 6 4.5Z" fill="none" stroke="#dadada" stroke-width="1.1"/><circle cx="10.5" cy="4.5" r="1.6" fill="#dadada"/><path d="M3 7L10 10.5L7 12L6 16Z" fill="#dadada"/></svg><svg class="a" style="left:1346px;top:12px;" width="10" height="8" viewBox="0 0 10 8"><path d="M1.7000000000000002 2.35L5 5.65L8.3 2.35" fill="none" stroke="#cfcfcf" stroke-width="1.15" stroke-linecap="round" stroke-linejoin="round"/></svg><div class="a" style="left:1364px;top:7px;width:38px;height:19px;background:#262626;border-radius:4px;border:1px solid #363636;"></div><div class="a" style="left:1364px;top:7px;width:18px;height:19px;background:#4772b3;border-radius:4px;border-top-right-radius:0;border-bottom-right-radius:0;"></div><svg class="a" style="left:1364px;top:8px;" width="18" height="17" viewBox="0 0 18 17"><path d="M4 14Q5 4 15 3M15 3H11M15 3V7" stroke="#f0f0f0" stroke-width="1.1" fill="none"/><circle cx="4" cy="14" r="1.8" fill="none" stroke="#f0f0f0"/></svg><svg class="a" style="left:1387px;top:12px;" width="10" height="8" viewBox="0 0 10 8"><path d="M1.7000000000000002 2.35L5 5.65L8.3 2.35" fill="none" stroke="#cfcfcf" stroke-width="1.15" stroke-linecap="round" stroke-linejoin="round"/></svg><div class="a" style="left:1409px;top:7px;width:38px;height:19px;background:#262626;border-radius:4px;border:1px solid #363636;"></div><div class="a" style="left:1409px;top:7px;width:18px;height:19px;background:#4772b3;border-radius:4px;border-top-right-radius:0;border-bottom-right-radius:0;"></div><svg class="a" style="left:1409px;top:8px;" width="18" height="17" viewBox="0 0 18 17"><circle cx="10" cy="7" r="4.5" fill="#f0f0f0"/><path d="M5 8A5 5 0 1 0 10 3" stroke="#f0f0f0" stroke-width="1.2" fill="none"/></svg><svg class="a" style="left:1432px;top:12px;" width="10" height="8" viewBox="0 0 10 8"><path d="M1.7000000000000002 2.35L5 5.65L8.3 2.35" fill="none" stroke="#cfcfcf" stroke-width="1.15" stroke-linecap="round" stroke-linejoin="round"/></svg><div class="a" style="left:1454px;top:7px;width:18px;height:19px;background:#3b3b3b;border-radius:4px;"></div><svg class="a" style="left:1454px;top:8px;" width="18" height="17" viewBox="0 0 18 17"><rect x="6" y="3" width="9" height="9" fill="none" stroke="#cfcfcf" stroke-width="1.1"/><rect x="3" y="6" width="9" height="9" fill="#3b3b3b" stroke="#cfcfcf" stroke-width="1.1"/></svg><div class="a" style="left:1479px;top:7px;width:96px;height:19px;background:#262626;border-radius:4px;"></div><div class="a" style="left:1479px;top:7px;width:75px;height:19px;background:#3d3d3d;border-radius:4px;border-top-right-radius:0;border-bottom-right-radius:0;"></div><div class="a" style="left:1498px;top:7px;width:18px;height:19px;background:#4772b3;border-radius:0px;"></div><svg class="a" style="left:1479px;top:7px;" width="75" height="19" viewBox="0 0 75 19"><circle cx="9.5" cy="9.5" r="6" fill="none" stroke="#d0d0d0" stroke-width="1.1"/><path d="M3.5 9.5H15.5M9.5 3.5V15.5M5 5.5H14M5 13.5H14" stroke="#d0d0d0" stroke-width="1" fill="none"/><circle cx="28.3" cy="9.5" r="6.2" fill="#e6e6f0"/><circle cx="47" cy="9.5" r="6" fill="none" stroke="#d0d0d0" stroke-width="1.1"/><path d="M47 3.5A6 6 0 0 1 47 15.5Z" fill="#d0d0d0"/><path d="M41 9.5A6 6 0 0 0 47 15.5V9.5Z" fill="#d0d0d0"/><circle cx="65.5" cy="9.5" r="6" fill="none" stroke="#d0d0d0" stroke-width="1.1"/><path d="M61.5 8A4.5 4.5 0 0 1 66 4.5" stroke="#d0d0d0" stroke-width="1" fill="none"/></svg><svg class="a" style="left:1560px;top:12px;" width="10" height="8" viewBox="0 0 10 8"><path d="M1.7000000000000002 2.35L5 5.65L8.3 2.35" fill="none" stroke="#cfcfcf" stroke-width="1.15" stroke-linecap="round" stroke-linejoin="round"/></svg><div class="a" style="left:5px;top:33px;width:93px;height:18px;background:#4a4a4a;border-radius:4px;"></div><div class="a" style="left:5px;top:33px;width:18.5px;height:18px;background:#4772b3;border-radius:4px;border-top-right-radius:0;border-bottom-right-radius:0;"></div><div class="a" style="left:42.2px;top:33px;width:1px;height:18px;background:#3c3c3c;border-radius:0px;"></div><div class="a" style="left:61.2px;top:33px;width:1px;height:18px;background:#3c3c3c;border-radius:0px;"></div><div class="a" style="left:79.8px;top:33px;width:1px;height:18px;background:#3c3c3c;border-radius:0px;"></div><svg class="a" style="left:0px;top:30px;" width="100" height="24" viewBox="0 0 100 24"><rect x="7.5" y="5.5" width="13.5" height="13.5" fill="none" stroke="#fff" stroke-width="1.2" stroke-dasharray="2.2 1.8"/><path d="M26.1 9.5H30.1V4.9H40.1V14.9H36.1V18.9H26.1Z" fill="#cdcdcd"/><rect x="45.7" y="10" width="9.2" height="8.9" fill="none" stroke="#cdcdcd" stroke-width="1.1" stroke-dasharray="1.8 1.6"/><path d="M49.5 4.9H58.8V14.9H54.4V9.5H49.5Z" fill="#cdcdcd"/><path fill-rule="evenodd" d="M64 9.5H68.2V4.9H78V14.9H73.7V18.9H64Z M68.2 9.5V14.9H73.7V9.5Z" fill="#cdcdcd"/><rect x="83.6" y="5.4" width="13" height="13" fill="none" stroke="#cdcdcd" stroke-width="1.1" stroke-dasharray="2 1.8"/><rect x="87" y="8.9" width="6.1" height="6" fill="#cdcdcd"/></svg><svg class="a" style="left:523px;top:37px;" width="10" height="8" viewBox="0 0 10 8"><path d="M1.7000000000000002 2.35L5 5.65L8.3 2.35" fill="none" stroke="#cfcfcf" stroke-width="1.15" stroke-linecap="round" stroke-linejoin="round"/></svg><svg class="a" style="left:536px;top:33px;" width="16" height="17" viewBox="0 0 16 17"><defs><linearGradient id="hx" x1="0" y1="0" x2="1" y2="1"><stop offset="0" stop-color="#33c3a0"/><stop offset="0.5" stop-color="#3c8fd8"/><stop offset="1" stop-color="#e8503a"/></linearGradient></defs><path d="M8 1L15 5V12L8 16L1 12V5Z" fill="url(#hx)"/><path d="M1 5L8 9V16L1 12Z" fill="#3ab96a"/><path d="M8 9L15 5V12L8 16Z" fill="#e05a48"/></svg><div class="a" style="left:558px;top:33px;width:113px;height:18px;background:#474747;border-radius:4px;"></div><div class="a" style="left:558px;top:33px;width:18px;height:18px;background:#4772b3;border-radius:4px;border-top-right-radius:0;border-bottom-right-radius:0;"></div><svg class="a" style="left:558px;top:33px;" width="113" height="18" viewBox="0 0 113 18"><path d="M3 6V3H6M12 3H15V6M15 12V15H12M6 15H3V12" stroke="#dfe8ff" stroke-width="1" fill="none"/><rect x="5.5" y="5.5" width="7" height="7" fill="#fff"/><circle cx="27.5" cy="9" r="6" fill="#d0d0d0"/><path d="M27.5 3A6 6 0 0 1 33.5 9H27.5V15A6 6 0 0 1 21.5 9H27.5Z" fill="#474747"/><circle cx="27.5" cy="9" r="6" fill="none" stroke="#d0d0d0" stroke-width="1.1"/><path d="M40 15L44 4L47 12Z" fill="#d0d0d0"/><circle cx="47.5" cy="12" r="3" fill="none" stroke="#d0d0d0" stroke-width="1.1"/><circle cx="49" cy="5" r="1.6" fill="#d0d0d0"/><circle cx="65" cy="9" r="6" fill="none" stroke="#d0d0d0" stroke-width="1.1"/><path d="M60 7Q63 6 63 9T67 12M66 3.5Q64 6 68 7" stroke="#d0d0d0" stroke-width="1" fill="none"/><path d="M82 3V9M80 9H85V11H80ZM78 15Q79 11 80 11H85Q86 11 87 15Z" fill="none" stroke="#d0d0d0" stroke-width="1.1"/><rect x="97" y="4" width="8" height="4" rx="1" fill="#d0d0d0"/><rect x="97" y="10" width="8" height="4" rx="1" fill="#d0d0d0"/><path d="M107 5H109V13H107" stroke="#d0d0d0" fill="none"/></svg><div class="a" style="left:576px;top:33px;width:1px;height:18px;background:#3a3a3a;border-radius:0px;"></div><div class="a" style="left:595px;top:33px;width:1px;height:18px;background:#3a3a3a;border-radius:0px;"></div><div class="a" style="left:614px;top:33px;width:1px;height:18px;background:#3a3a3a;border-radius:0px;"></div><div class="a" style="left:633px;top:33px;width:1px;height:18px;background:#3a3a3a;border-radius:0px;"></div><div class="a" style="left:652px;top:33px;width:1px;height:18px;background:#3a3a3a;border-radius:0px;"></div><div class="a" style="left:673px;top:33px;width:239px;height:18px;background:#1d1d1d;border-radius:5px;"></div><svg class="a" style="left:676px;top:34px;" width="18" height="16" viewBox="0 0 18 16"><circle cx="10.5" cy="6.5" r="4.2" fill="none" stroke="#cfcfcf" stroke-width="1.2"/><path d="M7.5 9.5L3 14" stroke="#cfcfcf" stroke-width="1.3"/></svg><div class="a" style="left:698px;top:37.61px;font-size:10.5px;line-height:10.5px;color:#6e6e6e;font-weight:normal;white-space:nowrap;">Search</div><div class="a" style="left:913px;top:33px;width:38px;height:18px;background:#474747;border-radius:4px;"></div><div class="a" style="left:931px;top:33px;width:1px;height:18px;background:#3a3a3a;border-radius:0px;"></div><svg class="a" style="left:913px;top:33px;" width="38" height="18" viewBox="0 0 38 18"><path d="M4 8Q9 13 14 8" stroke="#9a9a9a" stroke-width="1.1" fill="none"/><path d="M24 3H30V15L27 12L24 15Z" fill="#e6e6e6"/></svg><div class="a" style="left:951px;top:33px;width:65px;height:18px;background:#262626;border-radius:4px;"></div><div class="a" style="left:983px;top:33px;width:1px;height:18px;background:#333;border-radius:0px;"></div><svg class="a" style="left:951px;top:33px;" width="65" height="18" viewBox="0 0 65 18"><path d="M4 3V14H8M4 8H8" stroke="#e6e6e6" stroke-width="1.3" fill="none"/><rect x="9" y="5" width="6" height="4" fill="#e6e6e6"/><rect x="9" y="10.5" width="6" height="4" fill="#e6e6e6"/><path d="M19 8L21.5 10.5L24 8" stroke="#cfcfcf" stroke-width="1.2" fill="none"/><path d="M36 3H48L44 9V15L40 12V9Z" fill="#e6e6e6"/><path d="M54 8L56.5 10.5L59 8" stroke="#cfcfcf" stroke-width="1.2" fill="none"/></svg><svg class="a" style="left:1018px;top:33px;" width="18" height="18" viewBox="0 0 18 18"><path d="M9 2L15 4.5V9Q15 14 9 16Q3 14 3 9V4.5Z" fill="#e6e6e6"/><path d="M6 9L8.5 11.5L12.5 6.5" stroke="#262626" stroke-width="1.8" fill="none"/></svg><div class="a" style="left:1510px;top:32px;width:66px;height:20px;background:#262626;border-radius:4px;border:1px solid #333;"></div><div class="a" style="left:1517px;top:37.27px;font-size:11.5px;line-height:11.5px;color:#dcdcdc;font-weight:normal;white-space:nowrap;">Options</div><svg class="a" style="left:1564px;top:38px;" width="10" height="8" viewBox="0 0 10 8"><path d="M1.7000000000000002 2.35L5 5.65L8.3 2.35" fill="none" stroke="#cfcfcf" stroke-width="1.15" stroke-linecap="round" stroke-linejoin="round"/></svg><div class="a" style="left:63px;top:65.59px;font-size:11px;line-height:11px;color:#ececec;font-weight:bold;white-space:nowrap;text-shadow:0 0 1px #000;">Camera Perspective</div><div class="a" style="left:63px;top:83.59px;font-size:11px;line-height:11px;color:#ececec;font-weight:bold;white-space:nowrap;letter-spacing:0.19px;text-shadow:0 0 1px #000;">(0) Scene Collection | Cube.010</div><div class="a" style="left:5px;top:64px;width:40px;height:68px;background:#282828;border-radius:5px;border:1px solid #393939;"></div><div class="a" style="left:5px;top:138px;width:40px;height:139px;background:#282828;border-radius:5px;border:1px solid #393939;"></div><div class="a" style="left:5px;top:284px;width:40px;height:69px;background:#282828;border-radius:5px;border:1px solid #393939;"></div><div class="a" style="left:5px;top:358px;width:40px;height:34px;background:#282828;border-radius:5px;border:1px solid #393939;"></div><div class="a" style="left:5px;top:64px;width:40px;height:33px;background:#4772b3;border-radius:5px;border-bottom-left-radius:0;border-bottom-right-radius:0;"></div><div class="a" style="left:6px;top:97px;width:38px;height:1px;background:#383838;border-radius:0px;"></div><div class="a" style="left:6px;top:172px;width:38px;height:1px;background:#383838;border-radius:0px;"></div><div class="a" style="left:6px;top:207px;width:38px;height:1px;background:#383838;border-radius:0px;"></div><div class="a" style="left:6px;top:242px;width:38px;height:1px;background:#383838;border-radius:0px;"></div><div class="a" style="left:6px;top:318px;width:38px;height:1px;background:#383838;border-radius:0px;"></div><svg class="a" style="left:0px;top:0px;" width="50" height="400" viewBox="0 0 50 400"><g transform="translate(5,64)"><rect x="8" y="5.5" width="22" height="22" rx="1" fill="none" stroke="#e8b55a" stroke-width="1.3" stroke-dasharray="3.2 2.2"/><path d="M15.5 10.5V23L18.5 20L23.5 19.5Z" fill="#f2f2f2"/><path d="M36.5 29.5V33H33Z" fill="#a9c2ea"/></g><g transform="translate(5,97)"><circle cx="19" cy="17.5" r="10" fill="none" stroke="#b03030" stroke-width="2"/><circle cx="19" cy="17.5" r="10" fill="none" stroke="#ededed" stroke-width="2" stroke-dasharray="4.2 3.65"/><path d="M19 11.5V15.5M19 19.5V23.5M13 17.5H17M21 17.5H25" stroke="#9a9a9a" stroke-width="1.4"/></g><g transform="translate(5,138)" fill="#dedede"><path d="M19 5L15.5 9.5H22.5Z M19 29.5L15.5 25H22.5Z M7 17.2L11.5 13.7V20.7Z M31 17.2L26.5 13.7V20.7Z"/><path d="M19 9.5V13.5M19 21V25M11.5 17.2H15.5M22.5 17.2H26.5" stroke="#dedede" stroke-width="1.6"/></g><g transform="translate(5,172)"><path d="M12.2 11.5A9.5 9.5 0 0 1 27.5 13.5M25.8 24.5A9.5 9.5 0 0 1 10.5 22.5" fill="none" stroke="#e6e6e6" stroke-width="1.3"/><path d="M19 14.5L22.5 18L19 21.5L15.5 18Z" fill="#cfcfcf"/><path d="M7 15.5H13.5L10.2 20.5Z M24.5 20.5H31L27.8 15.5Z" fill="#e6e6e6"/></g><g transform="translate(5,207)"><rect x="11.5" y="10.5" width="15.5" height="15" fill="none" stroke="#cfcfcf" stroke-width="1.3"/><rect x="10.1" y="17.8" width="8.5" height="9.2" fill="#e6e6e6"/><path d="M19.5 17L25 11.5M21 11.5H25V15.5" stroke="#e6e6e6" stroke-width="1.3" fill="none"/><path d="M36.5 29.5V33H33Z" fill="#8c8c8c"/></g><g transform="translate(5,242)"><circle cx="19" cy="18" r="9.8" fill="none" stroke="#e0e0e0" stroke-width="1.2" stroke-dasharray="5.5 2.2" stroke-dashoffset="2"/><rect x="15.2" y="14" width="7.6" height="8.2" fill="#e8e8e8"/><path d="M19 6.5L16.5 10H21.5Z M19 29.5L16.5 26H21.5Z M7.5 18L11 15.5V20.5Z M30.5 18L27 15.5V20.5Z" fill="#e0e0e0"/></g><g transform="translate(5,284)"><path d="M8.5 21L21.5 8L25 11.5L12 24.5L7.5 25.5Z" fill="#e8e8e8"/><path d="M21.5 8L23 6.5Q24 5.5 25 6.5L26.5 8Q27.5 9 26.5 10L25 11.5Z" fill="#e8e8e8"/><path d="M8.2 23.5Q13 27 19 21T31.4 23" fill="none" stroke="#86d3ab" stroke-width="1.4"/><path d="M36.5 29.5V33H33Z" fill="#8c8c8c"/></g><g transform="translate(5,318)"><path d="M15.7 14.1A11.3 11.3 0 0 1 27 25.4H15.7Z" fill="#7fd6a6"/><path d="M17 12.5A13 13 0 0 1 29 25" fill="none" stroke="#e8e8e8" stroke-width="1"/><rect x="10" y="6" width="5" height="22.6" fill="#e8e8e8"/><rect x="10" y="25.4" width="20.8" height="3.2" fill="#e8e8e8"/><path d="M12.5 9H15M12.5 12H15M12.5 15H15M12.5 18H15M12.5 21H15M18 25.4V27M21 25.4V27M24 25.4V27M27 25.4V27" stroke="#282828" stroke-width="0.8"/></g><g transform="translate(5,358)"><path d="M10 4.5V13M5.8 8.7H14.2" stroke="#86d3ab" stroke-width="2.2"/><path d="M11.3 14.3H25.8V27.5H11.3Z M11.3 14.3L16.8 9.3H31.3V22.5L25.8 27.5M25.8 14.3L31.3 9.3" fill="none" stroke="#86d3ab" stroke-width="1.2"/><path d="M36.5 29.5V33H33Z" fill="#8c8c8c"/></g></svg><svg class="a" style="left:0;top:0" width="1584" height="300" viewBox="0 0 1584 300"><line x1="1532" y1="104" x2="1532" y2="82" stroke="#3f7ad0" stroke-width="2.2"/>
<line x1="1532" y1="104" x2="1520" y2="108.5" stroke="#d63b4e" stroke-width="2.2"/>
<line x1="1532" y1="104" x2="1550" y2="108" stroke="#73b423" stroke-width="2.2"/>
<circle cx="1505.5" cy="99.4" r="7.2" fill="#3f4a2c" stroke="#71a32d" stroke-width="1.2"/>
<circle cx="1550.3" cy="97.8" r="7.2" fill="#4a3034" stroke="#a8404d" stroke-width="1.2"/>
<circle cx="1532" cy="135.6" r="7.2" fill="#2f3b4c" stroke="#3b6fb8" stroke-width="1.2"/>
<circle cx="1532" cy="74" r="8" fill="#2f83e2"/>
<circle cx="1513.3" cy="111.3" r="8.3" fill="#e8354f"/>
<circle cx="1557.7" cy="109" r="8.3" fill="#79c421"/>
<path d="M1528.7 70H1535.3L1528.7 78H1535.5" fill="none" stroke="#0d2a52" stroke-width="1.5"/>
<path d="M1510.3 107.5L1516.3 115M1516.3 107.5L1510.3 115" stroke="#4a0a12" stroke-width="1.5"/>
<path d="M1554.7 105.5L1557.7 109.5L1560.7 105.5M1557.7 109.5V113.5" fill="none" stroke="#1f3a00" stroke-width="1.5"/>
<circle cx="1560" cy="159" r="13" fill="#262626"/>
<circle cx="1560" cy="189.5" r="13" fill="#262626"/>
<circle cx="1560" cy="220" r="13" fill="#262626"/>
<circle cx="1560" cy="250.5" r="13" fill="#262626"/>
<circle cx="1561.5" cy="157" r="4.8" fill="none" stroke="#e6e6e6" stroke-width="1.5"/>
<path d="M1561.5 154.5V159.5M1559 157H1564M1558 160.5L1553.5 165" stroke="#e6e6e6" stroke-width="1.6" fill="none"/>
<path d="M1555 190L1554 187Q1554.5 185.5 1556 186.5L1557 189V182.5Q1558 181 1559 182.5V188V181.5Q1560 180 1561 181.5V188V182.5Q1562 181 1563 182.5V189V185Q1564 184 1565 185V191Q1565 197 1560 197Q1557 197 1555 190Z" fill="#e6e6e6"/>
<circle cx="1557" cy="215.5" r="2.6" fill="#e6e6e6"/><circle cx="1562.5" cy="215.5" r="2.6" fill="#e6e6e6"/>
<path d="M1554 218.5H1565V225H1554Z M1565 221L1568.5 218.5V225L1565 222.5" fill="#e6e6e6"/>
<circle cx="1557" cy="215.5" r="0.8" fill="#262626"/><circle cx="1562.5" cy="215.5" r="0.8" fill="#262626"/>
<path d="M1554.5 246V257H1565.5V248H1557.5V245Q1557.5 242 1560.5 242Q1563.5 242 1563.5 245" fill="none" stroke="#e6e6e6" stroke-width="1.3"/>
<rect x="1559.5" y="251" width="2" height="3" fill="#e6e6e6"/>
<rect x="1574" y="70" width="7" height="12" fill="#2a2a2a"/>
<path d="M1579.5 73L1576 76L1579.5 79" stroke="#cfcfcf" stroke-width="1.1" fill="none"/></svg><div class="a" style="left:0px;top:890px;width:1584px;height:65px;background:#161616;border-radius:0px;"></div><div class="a" style="left:0px;top:893px;width:1582px;height:25px;background:#303030;border-radius:4px;border-top:1px solid #454545;border-right:1px solid #3a3a3a;border-bottom-left-radius:0;border-bottom-right-radius:0;"></div><div class="a" style="left:0px;top:918px;width:1582px;height:23px;background:#1d1d1d;border-radius:0px;"></div><div class="a" style="left:0px;top:941px;width:1582px;height:12px;background:#2b2b2b;border-radius:0px;"></div><div class="a" style="left:1523px;top:941px;width:58px;height:12px;background:#222222;border-radius:0px;"></div><div class="a" style="left:0px;top:953px;width:1582px;height:2px;background:#3d3d3d;border-radius:0px;"></div><div class="a" style="left:5px;top:897px;width:30px;height:18px;background:#262626;border-radius:4px;border:1px solid #363636;"></div><svg class="a" style="left:8px;top:898px;" width="18" height="16" viewBox="0 0 18 16"><circle cx="8" cy="8" r="6.5" fill="#e6e6e6"/><path d="M10 4L6.5 8L10 12" stroke="#262626" stroke-width="2" fill="none"/></svg><svg class="a" style="left:24px;top:902px;" width="10" height="8" viewBox="0 0 10 8"><path d="M1.7000000000000002 2.35L5 5.65L8.3 2.35" fill="none" stroke="#cfcfcf" stroke-width="1.15" stroke-linecap="round" stroke-linejoin="round"/></svg><div class="a" style="left:42px;top:897px;width:132px;height:18px;background:#262626;border-radius:4px;border:1px solid #363636;"></div><div class="a" style="left:112px;top:898px;width:1px;height:16px;background:#333;border-radius:0px;"></div><div class="a" style="left:49px;top:901.47px;font-size:11.5px;line-height:11.5px;color:#dcdcdc;font-weight:normal;white-space:nowrap;">Playback</div><svg class="a" style="left:101px;top:902px;" width="10" height="8" viewBox="0 0 10 8"><path d="M1.7000000000000002 2.35L5 5.65L8.3 2.35" fill="none" stroke="#cfcfcf" stroke-width="1.15" stroke-linecap="round" stroke-linejoin="round"/></svg><div class="a" style="left:120px;top:901.47px;font-size:11.5px;line-height:11.5px;color:#dcdcdc;font-weight:normal;white-space:nowrap;">Keying</div><svg class="a" style="left:162px;top:902px;" width="10" height="8" viewBox="0 0 10 8"><path d="M1.7000000000000002 2.35L5 5.65L8.3 2.35" fill="none" stroke="#cfcfcf" stroke-width="1.15" stroke-linecap="round" stroke-linejoin="round"/></svg><div class="a" style="left:183px;top:901.47px;font-size:11.5px;line-height:11.5px;color:#d8d8d8;font-weight:normal;white-space:nowrap;">View</div><div class="a" style="left:224px;top:901.47px;font-size:11.5px;line-height:11.5px;color:#d8d8d8;font-weight:normal;white-space:nowrap;">Marker</div><div class="a" style="left:697px;top:897px;width:38px;height:18px;background:#2e2e2e;border-radius:4px;"></div><div class="a" style="left:697px;top:897px;width:18px;height:18px;background:#454545;border-radius:4px;border-top-right-radius:0;border-bottom-right-radius:0;"></div><svg class="a" style="left:697px;top:897px;" width="38" height="18" viewBox="0 0 38 18"><circle cx="9" cy="9" r="5" fill="none" stroke="#cfcfcf" stroke-width="1.1"/><path d="M25 8L27 10L29 8" stroke="#5a5a5a" stroke-width="1.1" fill="none"/></svg><div class="a" style="left:742px;top:897px;width:118px;height:18px;background:#454545;border-radius:4px;"></div><div class="a" style="left:761.7px;top:897px;width:1px;height:18px;background:#3a3a3a;border-radius:0px;"></div><div class="a" style="left:781.4px;top:897px;width:1px;height:18px;background:#3a3a3a;border-radius:0px;"></div><div class="a" style="left:801.1px;top:897px;width:1px;height:18px;background:#3a3a3a;border-radius:0px;"></div><div class="a" style="left:820.8px;top:897px;width:1px;height:18px;background:#3a3a3a;border-radius:0px;"></div><div class="a" style="left:840.5px;top:897px;width:1px;height:18px;background:#3a3a3a;border-radius:0px;"></div><svg class="a" style="left:742px;top:897px;" width="118" height="18" viewBox="0 0 118 18"><g fill="#e8e8e8"><rect x="4.8" y="4" width="2.1" height="9.8"/><path d="M13.9 4V13.8L7.7 8.9Z"/><path d="M20.7 8.9L25.2 4.4L29.7 8.9L25.2 13.4Z"/><path d="M36 4.5V13.3L31 8.9Z"/><path d="M54.2 2.6V15.2L44 8.9Z"/><path d="M63.9 2.6V15.2L74.1 8.9Z"/><path d="M80.4 4.5V13.3L85.5 8.9Z"/><path d="M86.9 8.9L91.4 4.4L95.9 8.9L91.4 13.4Z"/><path d="M104.8 4V13.8L111 8.9Z"/><rect x="112.2" y="4" width="2.1" height="9.8"/></g></svg><div class="a" style="left:1302px;top:897px;width:73px;height:18px;background:#545454;border-radius:4px;"></div><div class="a" style="left:1302px;top:901.47px;font-size:11.5px;line-height:11.5px;color:#e6e6e6;font-weight:normal;white-space:nowrap;width:73px;text-align:center;">0</div><div class="a" style="left:1382px;top:897px;width:193px;height:18px;background:#545454;border-radius:4px;"></div><div class="a" style="left:1382px;top:897px;width:18px;height:18px;background:#464646;border-radius:4px;border-top-right-radius:0;border-bottom-right-radius:0;"></div><div class="a" style="left:1489px;top:897px;width:1px;height:18px;background:#464646;border-radius:0px;"></div><svg class="a" style="left:1382px;top:897px;" width="18" height="18" viewBox="0 0 18 18"><circle cx="9" cy="10" r="5.5" fill="none" stroke="#e0e0e0" stroke-width="1.2"/><path d="M9 7V10.5H11.5M7 3.5H11M9 3.5V4.5M13.5 4.5L15 3" stroke="#e0e0e0" stroke-width="1.1" fill="none"/></svg><div class="a" style="left:1416px;top:901.47px;font-size:11.5px;line-height:11.5px;color:#e6e6e6;font-weight:normal;white-space:nowrap;">Start</div><div class="a" style="left:1469px;top:901.47px;font-size:11.5px;line-height:11.5px;color:#e6e6e6;font-weight:normal;white-space:nowrap;">1</div><div class="a" style="left:1505px;top:901.47px;font-size:11.5px;line-height:11.5px;color:#e6e6e6;font-weight:normal;white-space:nowrap;">End</div><div class="a" style="left:1541px;top:901.47px;font-size:11.5px;line-height:11.5px;color:#e6e6e6;font-weight:normal;white-space:nowrap;">250</div><svg class="a" style="left:0px;top:0px;pointer-events:none" width="1584" height="955" viewBox="0 0 1584 955"><rect x="19.0" y="941" width="1" height="12" fill="#232323"/><rect x="48.5" y="941" width="1" height="12" fill="#1a1a1a"/><rect x="78.0" y="941" width="1" height="12" fill="#232323"/><rect x="107.5" y="941" width="1" height="12" fill="#1a1a1a"/><rect x="136.9" y="941" width="1" height="12" fill="#232323"/><rect x="166.4" y="941" width="1" height="12" fill="#1a1a1a"/><rect x="195.9" y="941" width="1" height="12" fill="#232323"/><rect x="225.4" y="941" width="1" height="12" fill="#1a1a1a"/><rect x="254.9" y="941" width="1" height="12" fill="#232323"/><rect x="284.4" y="941" width="1" height="12" fill="#1a1a1a"/><rect x="313.8" y="941" width="1" height="12" fill="#232323"/><rect x="343.3" y="941" width="1" height="12" fill="#1a1a1a"/><rect x="372.8" y="941" width="1" height="12" fill="#232323"/><rect x="402.3" y="941" width="1" height="12" fill="#1a1a1a"/><rect x="431.8" y="941" width="1" height="12" fill="#232323"/><rect x="461.3" y="941" width="1" height="12" fill="#1a1a1a"/><rect x="490.7" y="941" width="1" height="12" fill="#232323"/><rect x="520.2" y="941" width="1" height="12" fill="#1a1a1a"/><rect x="549.7" y="941" width="1" height="12" fill="#232323"/><rect x="579.2" y="941" width="1" height="12" fill="#1a1a1a"/><rect x="608.7" y="941" width="1" height="12" fill="#232323"/><rect x="638.1" y="941" width="1" height="12" fill="#1a1a1a"/><rect x="667.6" y="941" width="1" height="12" fill="#232323"/><rect x="697.1" y="941" width="1" height="12" fill="#1a1a1a"/><rect x="726.6" y="941" width="1" height="12" fill="#232323"/><rect x="756.1" y="941" width="1" height="12" fill="#1a1a1a"/><rect x="785.6" y="941" width="1" height="12" fill="#232323"/><rect x="815.0" y="941" width="1" height="12" fill="#1a1a1a"/><rect x="844.5" y="941" width="1" height="12" fill="#232323"/><rect x="874.0" y="941" width="1" height="12" fill="#1a1a1a"/><rect x="903.5" y="941" width="1" height="12" fill="#232323"/><rect x="933.0" y="941" width="1" height="12" fill="#1a1a1a"/><rect x="962.5" y="941" width="1" height="12" fill="#232323"/><rect x="991.9" y="941" width="1" height="12" fill="#1a1a1a"/><rect x="1021.4" y="941" width="1" height="12" fill="#232323"/><rect x="1050.9" y="941" width="1" height="12" fill="#1a1a1a"/><rect x="1080.4" y="941" width="1" height="12" fill="#232323"/><rect x="1109.9" y="941" width="1" height="12" fill="#1a1a1a"/><rect x="1139.4" y="941" width="1" height="12" fill="#232323"/><rect x="1168.8" y="941" width="1" height="12" fill="#1a1a1a"/><rect x="1198.3" y="941" width="1" height="12" fill="#232323"/><rect x="1227.8" y="941" width="1" height="12" fill="#1a1a1a"/><rect x="1257.3" y="941" width="1" height="12" fill="#232323"/><rect x="1286.8" y="941" width="1" height="12" fill="#1a1a1a"/><rect x="1316.2" y="941" width="1" height="12" fill="#232323"/><rect x="1345.7" y="941" width="1" height="12" fill="#1a1a1a"/><rect x="1375.2" y="941" width="1" height="12" fill="#232323"/><rect x="1404.7" y="941" width="1" height="12" fill="#1a1a1a"/><rect x="1434.2" y="941" width="1" height="12" fill="#232323"/><rect x="1463.7" y="941" width="1" height="12" fill="#1a1a1a"/><rect x="1493.1" y="941" width="1" height="12" fill="#232323"/><rect x="1522.6" y="941" width="1" height="12" fill="#1a1a1a"/><rect x="1552.1" y="941" width="1" height="12" fill="#232323"/></svg><div class="a" style="left:87.965px;top:925.17px;font-size:11.5px;line-height:11.5px;color:#cfcfcf;font-weight:normal;white-space:nowrap;width:40px;text-align:center;">10</div><div class="a" style="left:146.93px;top:925.17px;font-size:11.5px;line-height:11.5px;color:#cfcfcf;font-weight:normal;white-space:nowrap;width:40px;text-align:center;">20</div><div class="a" style="left:205.89499999999998px;top:925.17px;font-size:11.5px;line-height:11.5px;color:#cfcfcf;font-weight:normal;white-space:nowrap;width:40px;text-align:center;">30</div><div class="a" style="left:264.86px;top:925.17px;font-size:11.5px;line-height:11.5px;color:#cfcfcf;font-weight:normal;white-space:nowrap;width:40px;text-align:center;">40</div><div class="a" style="left:323.825px;top:925.17px;font-size:11.5px;line-height:11.5px;color:#cfcfcf;font-weight:normal;white-space:nowrap;width:40px;text-align:center;">50</div><div class="a" style="left:382.78999999999996px;top:925.17px;font-size:11.5px;line-height:11.5px;color:#cfcfcf;font-weight:normal;white-space:nowrap;width:40px;text-align:center;">60</div><div class="a" style="left:441.755px;top:925.17px;font-size:11.5px;line-height:11.5px;color:#cfcfcf;font-weight:normal;white-space:nowrap;width:40px;text-align:center;">70</div><div class="a" style="left:500.72px;top:925.17px;font-size:11.5px;line-height:11.5px;color:#cfcfcf;font-weight:normal;white-space:nowrap;width:40px;text-align:center;">80</div><div class="a" style="left:559.685px;top:925.17px;font-size:11.5px;line-height:11.5px;color:#cfcfcf;font-weight:normal;white-space:nowrap;width:40px;text-align:center;">90</div><div class="a" style="left:618.65px;top:925.17px;font-size:11.5px;line-height:11.5px;color:#cfcfcf;font-weight:normal;white-space:nowrap;width:40px;text-align:center;">100</div><div class="a" style="left:677.615px;top:925.17px;font-size:11.5px;line-height:11.5px;color:#cfcfcf;font-weight:normal;white-space:nowrap;width:40px;text-align:center;">110</div><div class="a" style="left:736.5799999999999px;top:925.17px;font-size:11.5px;line-height:11.5px;color:#cfcfcf;font-weight:normal;white-space:nowrap;width:40px;text-align:center;">120</div><div class="a" style="left:795.545px;top:925.17px;font-size:11.5px;line-height:11.5px;color:#cfcfcf;font-weight:normal;white-space:nowrap;width:40px;text-align:center;">130</div><div class="a" style="left:854.51px;top:925.17px;font-size:11.5px;line-height:11.5px;color:#cfcfcf;font-weight:normal;white-space:nowrap;width:40px;text-align:center;">140</div><div class="a" style="left:913.4749999999999px;top:925.17px;font-size:11.5px;line-height:11.5px;color:#cfcfcf;font-weight:normal;white-space:nowrap;width:40px;text-align:center;">150</div><div class="a" style="left:972.4399999999999px;top:925.17px;font-size:11.5px;line-height:11.5px;color:#cfcfcf;font-weight:normal;white-space:nowrap;width:40px;text-align:center;">160</div><div class="a" style="left:1031.405px;top:925.17px;font-size:11.5px;line-height:11.5px;color:#cfcfcf;font-weight:normal;white-space:nowrap;width:40px;text-align:center;">170</div><div class="a" style="left:1090.37px;top:925.17px;font-size:11.5px;line-height:11.5px;color:#cfcfcf;font-weight:normal;white-space:nowrap;width:40px;text-align:center;">180</div><div class="a" style="left:1149.335px;top:925.17px;font-size:11.5px;line-height:11.5px;color:#cfcfcf;font-weight:normal;white-space:nowrap;width:40px;text-align:center;">190</div><div class="a" style="left:1208.3px;top:925.17px;font-size:11.5px;line-height:11.5px;color:#cfcfcf;font-weight:normal;white-space:nowrap;width:40px;text-align:center;">200</div><div class="a" style="left:1267.2649999999999px;top:925.17px;font-size:11.5px;line-height:11.5px;color:#cfcfcf;font-weight:normal;white-space:nowrap;width:40px;text-align:center;">210</div><div class="a" style="left:1326.23px;top:925.17px;font-size:11.5px;line-height:11.5px;color:#cfcfcf;font-weight:normal;white-space:nowrap;width:40px;text-align:center;">220</div><div class="a" style="left:1385.195px;top:925.17px;font-size:11.5px;line-height:11.5px;color:#cfcfcf;font-weight:normal;white-space:nowrap;width:40px;text-align:center;">230</div><div class="a" style="left:1444.1599999999999px;top:925.17px;font-size:11.5px;line-height:11.5px;color:#cfcfcf;font-weight:normal;white-space:nowrap;width:40px;text-align:center;">240</div><div class="a" style="left:1503.125px;top:925.17px;font-size:11.5px;line-height:11.5px;color:#cfcfcf;font-weight:normal;white-space:nowrap;width:40px;text-align:center;">250</div><div class="a" style="left:48px;top:937px;width:2px;height:18px;background:#4772b3;border-radius:0px;"></div><div class="a" style="left:38px;top:921px;width:23px;height:16px;background:#4772b3;border-radius:4px;"></div><div class="a" style="left:38px;top:924.57px;font-size:11.5px;line-height:11.5px;color:#ffffff;font-weight:normal;white-space:nowrap;width:23px;text-align:center;">0</div><svg class="a" style="left:1574px;top:930px;" width="8" height="16" viewBox="0 0 8 16"><path d="M6 4L2 8L6 12" stroke="#8a8a8a" stroke-width="1" fill="none"/></svg>
</body></html>
